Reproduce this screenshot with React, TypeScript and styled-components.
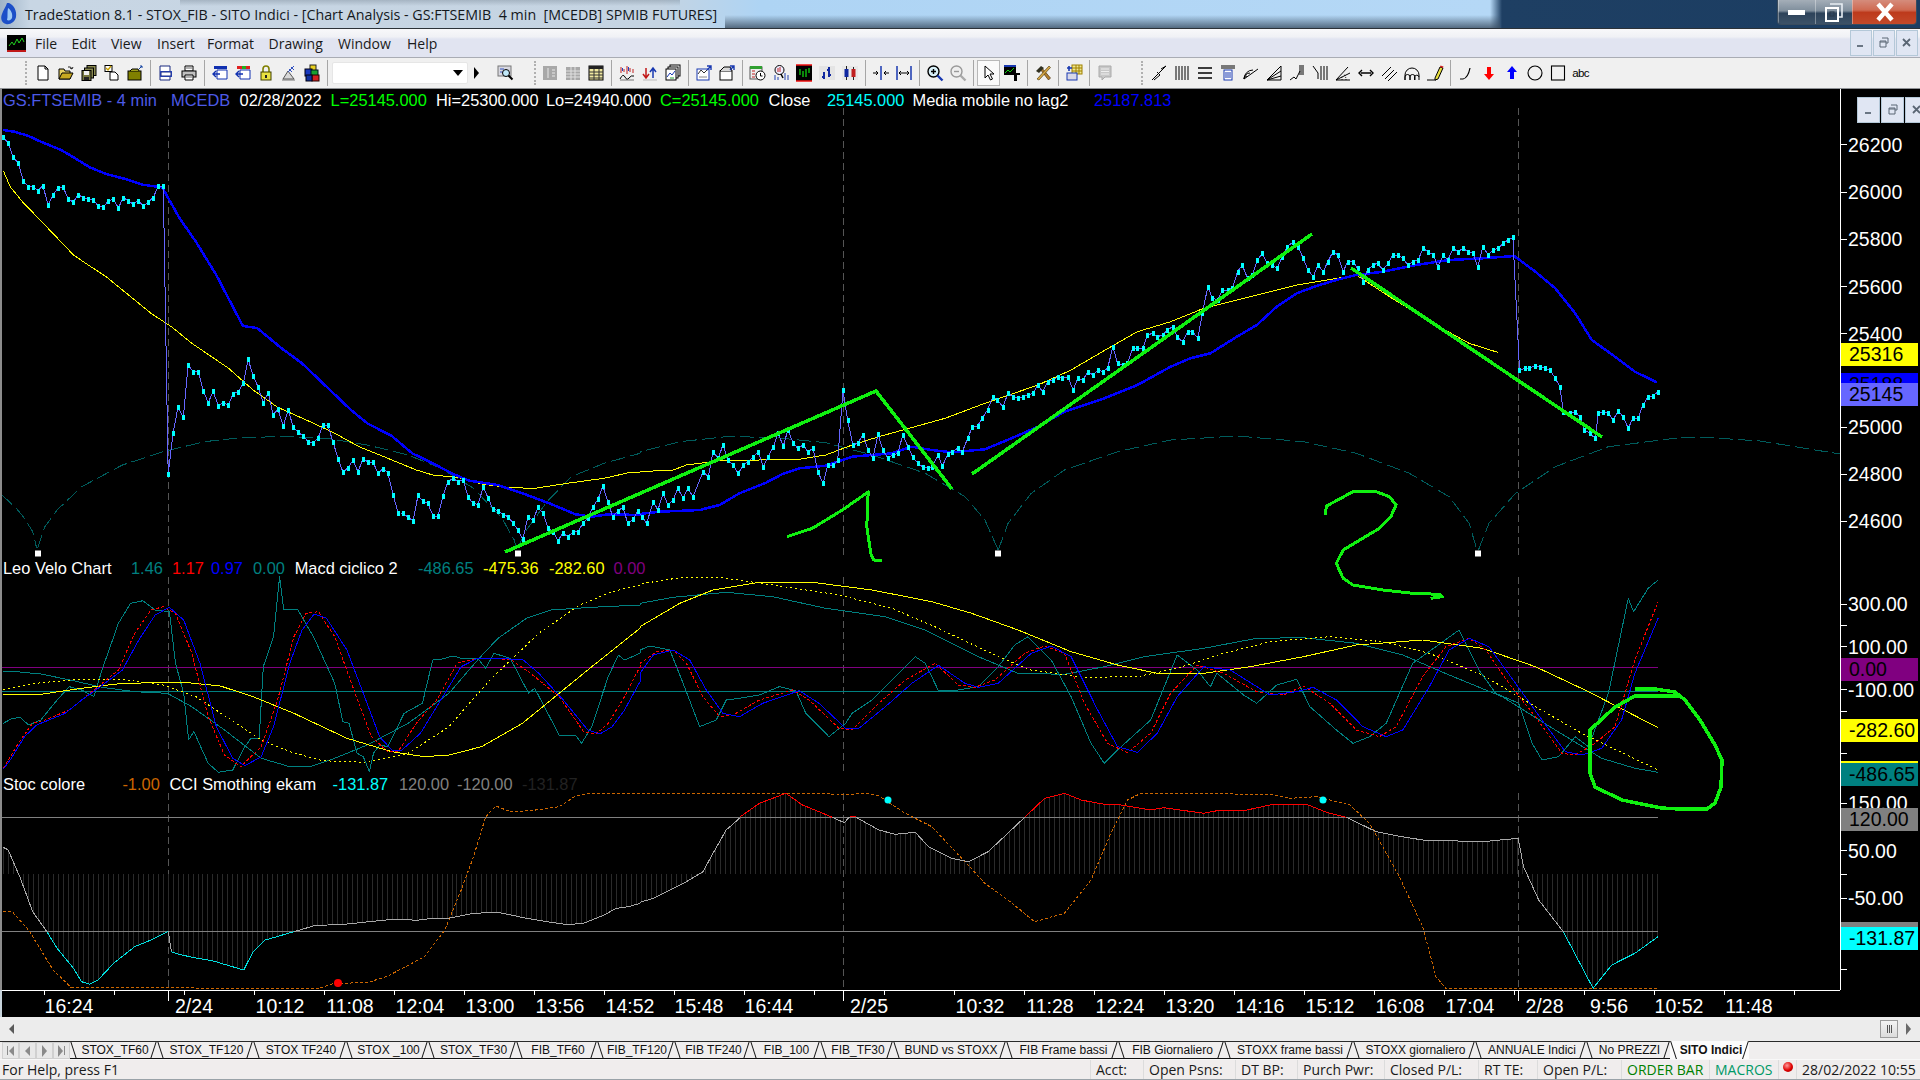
import React from "react";
import styled, { createGlobalStyle } from "styled-components";

const GlobalStyle = createGlobalStyle`
  html, body {
    margin: 0;
    padding: 0;
    background: #c8d4dc;
    overflow: hidden;
  }
`;

const Shell = styled.div`
  width: 1920px;
  height: 1080px;
  display: flex;
  flex-direction: column;
  overflow: hidden;
  font-family: "Liberation Sans", Arial, sans-serif;
`;

/* ---------- window chrome ---------- */

const TitleBar = styled.div`
  flex: 0 0 29px;
  box-sizing: border-box;
  display: flex;
  align-items: center;
  border-bottom: 1px solid #2c3238;
  background:
    linear-gradient(180deg, rgba(60, 80, 100, 0) 0, rgba(60, 80, 100, 0.8) 100%) 725px 15px / 775px 13px no-repeat,
    linear-gradient(180deg, rgba(90, 105, 120, 0.3) 0, rgba(90, 105, 120, 0) 100%) 180px 0 / 500px 6px no-repeat,
    linear-gradient(90deg, #9fb4c8 0, #c8d6e4 30px, #c5d4e2 660px, #aed4f4 760px, #b5d8f6 1490px, #1e3f63 1502px, #1b3d62 100%);
`;

const AppLogo = styled.svg`
  flex: 0 0 18px;
  margin: 0 7px 0 0;
`;

const TitleText = styled.span`
  flex: 1;
  font-family: "Open Sans", sans-serif;
  font-size: 14.28px;
  color: #14181c;
  white-space: pre;
`;

const WindowButtons = styled.div`
  display: flex;
  align-self: flex-start;
  margin-right: 3px;
  border: 1px solid #3a4c5e;
  border-top: none;
  border-radius: 0 0 4px 4px;
  overflow: hidden;
`;

const WindowButton = styled.div<{ $close?: boolean }>`
  width: ${(p) => (p.$close ? "63px" : "36px")};
  height: 24px;
  display: flex;
  align-items: center;
  justify-content: center;
  border-left: 1px solid rgba(255, 255, 255, 0.35);
  background: ${(p) =>
    p.$close
      ? "linear-gradient(180deg, #d58c7c 0, #cf6a52 42%, #bd3a1c 52%, #c4492a 100%)"
      : "linear-gradient(180deg, #a4aeb8 0, #7f8e9c 45%, #2d435a 55%, #3d5268 100%)"};
`;

const MenuBar = styled.div`
  flex: 0 0 29px;
  box-sizing: border-box;
  display: flex;
  align-items: center;
  border-bottom: 1px solid #a9acb4;
  background: linear-gradient(180deg, #f8f8fa 0, #f0f1f5 28%, #e1e4f1 36%, #e1e4f1 100%);
`;

const MenuLogo = styled.svg`
  margin: 0 9px 0 7px;
`;

const MenuItem = styled.span<{ $w: number }>`
  flex: 0 0 ${(p) => p.$w}px;
  font-family: "Open Sans", sans-serif;
  font-size: 14px;
  color: #1a1a1a;
`;

const MdiButtons = styled.div<{ $overlay?: boolean }>`
  display: flex;
  gap: 1px;
  margin-left: auto;
  margin-right: 2px;
  ${(p) =>
    p.$overlay &&
    `position: absolute; top: 8px; left: 16px; margin: 0; z-index: 5;
     & > div { width: 23px; }`}
`;

const MdiButton = styled.div`
  width: 22px;
  height: 26px;
  flex: none;
  display: flex;
  align-items: center;
  justify-content: center;
  background: #e0e6f3;
  border: 1px solid #b4c8d8;
  box-sizing: border-box;
`;

const ToolBar = styled.div`
  flex: 0 0 31px;
  box-sizing: border-box;
  display: flex;
  align-items: center;
  background: #f0f0f0;
  border-bottom: 1px solid #8f9296;
`;

const Grip = styled.div<{ $w: number; $right: number }>`
  flex: 0 0 ${(p) => p.$w}px;
  box-sizing: border-box;
  display: flex;
  justify-content: flex-end;
  padding-right: ${(p) => p.$right}px;

  &::before {
    content: "";
    height: 24px;
    border-left: 2px dotted #b0b0b0;
  }
`;

const ToolButton = styled.div<{ $pressed?: boolean }>`
  flex: 0 0 23px;
  height: 26px;
  box-sizing: border-box;
  display: flex;
  align-items: center;
  justify-content: center;
  ${(p) => p.$pressed && "background: #fafafa; border: 1px solid #b8b8b8;"}
`;

const AbcLabel = styled.span`
  font-size: 11.5px;
  letter-spacing: -0.6px;
  color: #000;
`;

const ToolSep = styled.div`
  flex: 0 0 8px;
  display: flex;
  justify-content: center;

  &::before {
    content: "";
    height: 26px;
    border-left: 1px solid #a6a6a6;
  }
`;

const Combo = styled.div`
  flex: 0 0 136px;
  height: 22px;
  box-sizing: border-box;
  background: #fff;
  border: 1px solid #e6e6e6;
  border-radius: 2px;
  display: flex;
  align-items: center;
  justify-content: flex-end;
  padding-right: 4px;
`;

const Triangle = styled.span<{ $dir: "down" | "right" | "left"; $color?: string }>`
  width: 0;
  height: 0;
  border-style: solid;
  border-color: transparent;
  ${(p) => {
    const c = p.$color || "#000";
    if (p.$dir === "down") return `border-width: 6px 5px 0 5px; border-top-color: ${c};`;
    if (p.$dir === "right") return `border-width: 6px 0 6px 5px; border-left-color: ${c};`;
    return `border-width: 5px 5px 5px 0; border-right-color: ${c};`;
  }}
`;

const PlaySlot = styled.div`
  flex: 0 0 18px;
  margin-right: 7.5px;
  display: flex;
  align-items: center;
  justify-content: center;
`;

/* ---------- chart ---------- */

const ChartBody = styled.div`
  flex: 0 0 901px;
  display: flex;
  background: #000;
  border-left: 2px solid #8c8c8c;
`;

const Plot = styled.div`
  position: relative;
  flex: 0 0 1838px;
  height: 901px;
`;

const PlotSvg = styled.svg`
  display: block;
`;

const Legend = styled.div<{ $top: number }>`
  position: absolute;
  left: 1px;
  top: ${(p) => p.$top}px;
  display: flex;
  font-size: 16.4px;
  line-height: 20px;
  white-space: pre;
`;

const LegendItem = styled.span<{ $w: number; $color: string }>`
  flex: 0 0 ${(p) => p.$w}px;
  color: ${(p) => p.$color};
`;

const PriceAxis = styled.div`
  position: relative;
  flex: 1;
  border-left: 1px solid #fff;
  overflow: hidden;
  font-size: 19.5px;
`;

const Tick = styled.i`
  position: absolute;
  left: 0;
  width: 6px;
  height: 1px;
  background: #fff;
`;

const AxisLabel = styled.span`
  position: absolute;
  left: 7px;
  line-height: 22px;
  color: #fff;
  white-space: pre;
`;

const PriceTag = styled.span<{ $bg: string }>`
  position: absolute;
  left: 0;
  width: 77px;
  height: 23px;
  box-sizing: border-box;
  padding-left: 8px;
  line-height: 23px;
  color: #000;
  background: ${(p) => p.$bg};
`;

const TimeAxis = styled.div`
  position: relative;
  flex: 0 0 27px;
  background: #000;
  margin-left: 2px;
  font-size: 19.5px;
`;

const TimeRule = styled.div`
  width: 1838px;
  height: 1px;
  background: #fff;
`;

const TimeTick = styled.i<{ $long?: boolean }>`
  position: absolute;
  top: 1px;
  width: 1px;
  height: ${(p) => (p.$long ? "10px" : "4px")};
  background: #fff;
`;

const TimeLabel = styled.span`
  position: absolute;
  top: 4px;
  line-height: 24px;
  color: #fff;
  transform: translateX(-50%);
`;

/* ---------- scrollbar, tabs, status ---------- */

const ScrollRow = styled.div`
  flex: 0 0 24px;
  display: flex;
  align-items: center;
  padding: 0 9px;
  background: #ececec;
`;

const ScrollThumb = styled.div`
  width: 18px;
  height: 18px;
  margin-left: auto;
  margin-right: 8px;
  box-sizing: border-box;
  display: flex;
  align-items: center;
  justify-content: center;
  gap: 1px;
  background: linear-gradient(180deg, #f4f4f4, #dcdcdc);
  border: 1px solid #9c9c9c;
`;

const ThumbLine = styled.i`
  width: 1px;
  height: 8px;
  background: #555;
`;

const TabStrip = styled.div`
  flex: 0 0 18px;
  box-sizing: border-box;
  display: flex;
  border-top: 1px solid #2a2a2a;
  background: #f0eeee;
`;

const TabNav = styled.div`
  flex: 0 0 70px;
  box-sizing: border-box;
  padding-left: 2px;
  display: flex;
`;

const TabNavButton = styled.div`
  flex: 0 0 17px;
  box-sizing: border-box;
  display: flex;
  align-items: center;
  justify-content: center;
  gap: 1px;
  background: #e8e8e8;
  border: 1px solid #d0d0d0;
`;

const NavBar = styled.i`
  width: 1px;
  height: 9px;
  background: #8a8a8a;
`;

const Tab = styled.div<{ $w: number; $active?: boolean }>`
  position: relative;
  flex: 0 0 ${(p) => p.$w}px;
  box-sizing: border-box;
  padding-left: 3px;
  display: flex;
  align-items: center;
  justify-content: center;
  font-size: 12px;
  color: #111;
  border-bottom: 1px solid #111;
  font-weight: ${(p) => (p.$active ? 700 : 400)};
  ${(p) => p.$active && "background: #fcfcfc; margin-top: -1px; border-bottom: none;"}

  &::before,
  &::after {
    content: "";
    position: absolute;
    top: 0;
    bottom: 0;
    border-left: 1px solid #111;
  }

  &::before {
    left: 3px;
    transform: skewX(18deg);
  }

  &::after {
    right: 3px;
    transform: skewX(-18deg);
  }
`;

const StatusBar = styled.div`
  flex: 0 0 19px;
  box-sizing: border-box;
  display: flex;
  align-items: center;
  border-top: 1px solid #f8f8f8;
  border-bottom: 1px solid #9aa2a8;
  background: #f0eded;
  font-family: "Open Sans", sans-serif;
  font-size: 14px;
  color: #1a1a1a;
`;

const StatusHelp = styled.span`
  flex: 1;
  padding-left: 2px;
`;

const StatusCell = styled.span<{ $w: number; $color?: string }>`
  flex: 0 0 ${(p) => p.$w}px;
  box-sizing: border-box;
  height: 100%;
  padding-left: 5px;
  display: flex;
  align-items: center;
  white-space: pre;
  border-left: 1px solid #dcdcdc;
  color: ${(p) => p.$color || "inherit"};
`;

const StatusDot = styled.i`
  width: 10px;
  height: 10px;
  margin: -5px 0 0 -1px;
  border-radius: 50%;
  background: radial-gradient(circle at 40% 35%, #ff9a9a, #e00000 55%, #8a0000);
`;

/* ---------- traced chart data: flat x,y lists read off crops of the chart ---------- */

type Pt = [number, number];

const mapFlat = (flat: number[], sx: number, ox: number, oy: number): Pt[] => {
  const out: Pt[] = [];
  for (let i = 0; i < flat.length; i += 2) out.push([ox + flat[i] / sx, oy + flat[i + 1] / 3]);
  return out;
};
const topL = (f: number[]) => mapFlat(f, 2.45, 0, 100);
const topR = (f: number[]) => mapFlat(f, 1.5077, 640, 200);
const lowL = (f: number[]) => mapFlat(f, 2.45, 0, 550);
const lowR = (f: number[]) => mapFlat(f, 1.5077, 640, 560);

const price: Pt[] = [
  ...topL([8,110,20,130,32,170,45,190,57,243,69,260,81,260,93,272,105,257,118,315,130,284,142,264,154,260,167,296,179,306,192,284,204,293,216,298,228,299,241,318,253,321,265,304,277,298,290,323,302,293,314,302,326,312,338,302,351,318,363,306,375,293,388,258,400,258,412,1122,424,998,436,922,449,952,461,794,473,815,486,815,498,872,510,908,522,874,535,918,547,908,559,915,571,882,584,875,596,850,608,778,620,828,632,860,645,908,657,878,669,944,681,928,694,978,706,930,718,980,730,997,743,1007,755,1026,767,1029,779,1015,791,975,803,976,816,1026,828,1076,840,1116,853,1103,865,1080,877,1116,889,1076,902,1086,914,1086,926,1120,938,1106,950,1118,963,1184,975,1238,987,1240,1000,1252,1012,1263,1024,1186,1036,1204,1048,1210,1061,1248,1073,1248,1085,1188,1097,1145,1110,1135,1122,1145,1135,1140,1147,1192,1159,1210,1171,1214,1184,1160,1196,1195,1208,1228,1220,1232,1233,1244,1245,1250,1257,1270,1269,1290,1281,1318,1293,1252,1306,1260,1318,1222,1330,1240,1343,1284,1355,1295,1367,1322,1379,1300,1391,1310,1404,1296,1416,1295,1428,1270,1440,1255,1452,1222,1465,1198,1477,1158,1489,1205,1501,1250,1514,1232,1526,1222,1538,1270,1551,1258,1563,1232]),
  ...topR([3,950,10,970,20,905,27,930,35,880,42,915,50,900,57,865,65,895,72,865,80,890,95,815,103,830,110,755,118,775,125,735,133,780,140,795,148,820,156,795,163,785,171,770,178,755,186,800,193,770,201,740,208,700,216,738,223,690,231,730,238,745,246,735,253,755,261,745,268,815,276,850,283,795,291,795,298,780,306,570,313,660,321,735,328,730,336,705,344,750,351,775,359,703,366,750,374,775,381,765,389,760,396,705,404,740,411,770,419,790,426,800,434,805,441,800,449,765,456,798,464,762,471,755,479,745,486,755,494,715,501,680,509,678,516,655,524,630,532,590,539,600,547,620,555,580,562,590,570,595,577,590,585,585,592,580,600,555,607,575,615,545,622,540,630,530,637,535,645,530,653,570,660,535,668,540,675,515,683,525,690,510,698,515,705,505,713,440,720,490,728,495,735,490,743,445,750,445,758,445,765,405,773,400,780,410,788,405,795,390,803,380,810,410,818,425,826,395,833,395,841,415,848,340,856,260,863,295,871,300,878,270,886,270,893,265,901,215,908,195,916,235,923,225,931,180,938,160,946,190,953,195,961,205,968,170,976,140,985,125,992,140,1000,175,1007,210,1015,230,1022,195,1030,215,1037,185,1045,155,1052,165,1060,215,1067,185,1075,185,1082,205,1090,245,1097,210,1105,195,1112,190,1120,210,1128,190,1135,165,1143,165,1150,175,1158,195,1165,185,1173,180,1181,145,1188,155,1196,165,1203,200,1211,165,1218,180,1226,145,1233,155,1241,145,1248,155,1256,160,1263,200,1271,140,1279,165,1286,150,1294,145,1301,130,1309,120,1316,112,1326,510,1334,505,1341,505,1349,497,1357,500,1365,505,1372,510,1380,535,1387,560,1392,635,1402,640,1410,635,1417,650,1424,690,1432,700,1440,715,1445,640,1452,635,1460,640,1467,660,1475,632,1482,650,1490,685,1497,655,1505,655,1512,615,1520,590,1527,588,1535,575]),
];

const maBlue: Pt[] = [
  ...topL([8,90,35,95,70,108,100,125,150,150,180,172,220,202,260,222,310,238,350,254,395,262,400,268,440,355,480,425,530,525,595,678,630,684,690,745,740,790,800,860,860,930,900,970,960,1008,1010,1060,1060,1090,1110,1122,1150,1142,1220,1155,1280,1180,1350,1212,1410,1243,1450,1250,1490,1243,1568,1245]),
  ...topR([0,942,30,935,90,930,120,915,150,880,190,848,215,822,240,805,280,797,320,770,380,760,410,740,440,750,470,757,520,748,560,715,600,680,640,635,700,595,750,555,800,500,830,475,860,460,900,410,930,375,960,320,990,280,1020,258,1050,240,1080,225,1120,215,1170,195,1220,180,1270,175,1318,168,1350,215,1380,265,1410,340,1435,420,1470,470,1500,515,1533,547]),
];

const maYellow: Pt[] = [
  ...topL([8,212,25,260,55,305,110,375,180,465,210,490,260,530,310,580,370,640,420,680,470,730,560,805,620,870,680,922,760,965,820,1000,880,1040,950,1075,1020,1110,1060,1125,1120,1132,1180,1152,1250,1163,1310,1165,1400,1148,1480,1135,1540,1118,1568,1116]),
  ...topR([0,815,50,810,70,795,120,782,240,778,280,765,320,735,360,710,400,688,460,655,520,610,600,555,650,510,710,440,750,395,800,365,850,325,920,290,990,255,1060,232,1080,225,1130,290,1200,375,1250,430,1293,457]),
];

const arcs: Pt[][] = [
  topL([5,1185,40,1225,60,1255,80,1295,90,1345]),
  [
    ...topL([92,1345,110,1280,140,1230,200,1160,300,1095,400,1055,500,1025,600,1012,700,1010,800,1015,900,1035,1000,1065,1080,1105,1160,1165,1230,1255,1260,1320,1265,1345]),
  ],
  [
    ...topL([1268,1345,1290,1290,1340,1205,1400,1130,1480,1090,1568,1060]),
    ...topR([0,755,60,725,130,710,200,712,280,728,350,765,430,820,490,890,520,960,540,1050]),
  ],
  topR([540,1050,555,970,590,880,640,810,720,755,800,720,900,708,1000,725,1080,760,1160,820,1220,890,1250,970,1262,1050]),
  [
    ...topR([1264,1050,1280,970,1320,880,1380,800,1460,740,1560,715]),
    [1700, 437], [1760, 441], [1840, 454],
  ],
];

const leoBlue: Pt[] = [
  ...lowL([8,658,25,630,60,560,90,525,160,490,200,450,240,415,300,360,340,270,380,195,415,172,450,210,490,340,530,530,570,625,600,647,640,620,670,530,710,340,740,240,770,192,800,205,850,300,890,430,930,560,960,600,985,600,1030,550,1080,450,1130,350,1170,325,1280,328,1320,370,1380,450,1440,540,1470,552,1500,530,1530,480,1568,395]),
  ...lowR([0,340,20,285,50,270,75,300,100,390,125,460,150,470,185,430,240,392,270,430,310,505,330,505,370,440,410,370,450,316,490,370,510,382,540,370,590,280,620,258,650,290,690,450,720,560,750,577,780,520,810,410,850,320,890,330,950,405,990,395,1015,382,1050,420,1090,500,1125,530,1150,510,1190,380,1220,270,1250,235,1280,260,1320,370,1360,480,1395,575,1420,585,1450,565,1480,480,1500,340,1535,175]),
];

const leoRed: Pt[] = [
  ...lowL([8,655,50,570,80,520,110,510,170,480,230,420,290,360,330,250,370,180,400,170,430,190,470,310,510,500,550,615,590,650,640,590,680,450,720,260,750,190,780,185,820,260,870,430,910,560,950,605,975,605,1020,520,1070,450,1120,340,1170,325,1250,328,1300,370,1370,440,1430,545,1460,553,1490,520,1530,440,1568,350]),
  ...lowR([0,310,25,275,50,270,70,310,95,410,120,470,140,465,180,420,230,390,255,420,300,505,320,510,360,430,400,360,445,310,480,375,505,382,535,360,580,280,610,258,640,280,670,430,705,550,735,578,770,520,800,400,840,315,880,340,930,395,970,405,1000,378,1040,430,1080,510,1115,530,1140,500,1180,350,1215,260,1250,235,1275,270,1310,370,1350,470,1390,580,1410,585,1440,550,1470,500,1500,300,1535,125]),
];

const leoTeal: Pt[] = [
  ...lowL([8,520,30,505,50,503,70,525,100,510,140,450,170,410,200,420,230,440,250,360,290,220,320,160,350,152,380,180,415,185,430,340,450,430,462,570,475,545,510,640,535,667,570,660,600,590,615,565,635,565,645,350,670,260,685,80,695,178,730,180,770,265,820,400,840,515,855,520,875,610,890,620,905,665,915,610,930,585,950,590,990,490,1035,460,1060,330,1080,328,1110,318,1130,325,1170,325,1190,355,1210,310,1250,325,1295,430,1310,415,1370,555,1410,555,1425,580,1450,530,1490,380,1515,315,1530,330,1568,310]),
  ...lowR([0,270,15,258,45,270,65,370,90,500,115,480,130,420,150,415,180,405,210,380,235,392,250,460,285,530,310,490,320,460,350,420,380,360,415,290,430,310,450,392,480,390,510,380,540,320,565,255,585,230,620,300,650,410,680,550,700,610,720,570,770,480,810,285,840,330,860,380,870,340,910,405,930,430,960,375,990,358,1010,440,1050,510,1075,550,1100,530,1125,490,1165,310,1235,210,1265,330,1290,400,1325,430,1345,550,1360,600,1385,590,1410,530,1430,560,1460,400,1490,115,1498,155,1520,85,1535,60]),
];

const macdTeal: Pt[] = [
  ...lowL([8,366,40,365,100,372,180,392,250,412,330,425,410,430,470,470,550,540,640,625,710,650,760,650,820,625,900,585,1000,520,1100,430,1170,330,1220,265,1290,205,1350,180,1450,172,1568,165]),
  ...lowR([0,130,50,112,130,97,200,110,280,145,370,170,430,210,510,290,570,340,640,343,700,320,760,290,850,265,930,235,1000,233,1080,250,1150,285,1220,345,1300,410,1380,510,1450,595,1500,625,1535,637]),
];

const macdYellow: Pt[] = [
  ...lowL([8,433,100,433,200,415,300,400,450,397,540,408,620,440,720,490,850,565,960,605,1040,620,1100,615,1180,590,1280,520,1370,430,1450,350,1568,235]),
  ...lowR([0,200,60,130,110,90,180,67,260,67,350,90,440,125,500,160,570,210,650,275,720,315,780,340,850,340,920,320,1000,290,1080,255,1180,240,1270,265,1350,320,1430,395,1535,503]),
];

const macdDotted: Pt[] = [
  ...lowL([8,418,100,398,200,388,310,390,400,405,480,440,560,505,640,570,710,605,790,632,890,637,1000,610,1100,530,1200,390,1320,250,1420,165,1500,125,1568,105]),
  ...lowR([0,72,60,53,120,52,200,75,300,105,380,145,450,205,540,290,590,330,670,352,750,350,810,325,880,280,950,245,1040,230,1120,245,1190,280,1270,345,1350,440,1420,520,1535,630]),
];

const stoc: Pt[] = [
  ...lowL([8,1085,30,1085,70,1140,130,1260,175,1313,780,1315,820,1300,900,1298,950,1278,1040,1220,1090,1140,1130,1020,1160,920,1190,800,1215,768,1250,785,1300,782,1370,770,1410,738,1440,730,1568,730]),
  ...lowR([0,700,280,700,300,705,340,700,360,708,400,760,440,800,490,905,520,970,555,1020,595,1085,640,1060,680,960,710,820,735,720,755,700,950,703,980,715,1020,710,1070,735,1100,790,1145,950,1180,1100,1200,1250,1215,1285,1535,1285]),
];

// CCI is drawn in pieces: grey in the band, red over 120, cyan under -120
const cciPieces: { color: string; pts: Pt[] }[] = [
  { color: "#a8a8a8", pts: lowL([8,892,20,900,50,985,80,1085,115,1145]) },
  { color: "#00e0e0", pts: lowL([115,1145,140,1195,180,1255,200,1295,220,1303,240,1290,280,1238,330,1190,370,1170,412,1144]) },
  { color: "#a8a8a8", pts: lowL([412,1144,420,1205]) },
  { color: "#00e0e0", pts: lowL([420,1205,430,1210,470,1222,520,1232,597,1260,620,1205,650,1170,720,1145]) },
  { color: "#a8a8a8", pts: [...lowL([720,1145,770,1127,850,1122,970,1107,1020,1111,1060,1105,1100,1105,1160,1090,1220,1087,1290,1105,1340,1115,1390,1124,1430,1120,1480,1095,1510,1075,1540,1070,1568,1060]), ...lowR([0,1027,20,1015,50,985,70,965,95,935,110,880,130,810,150,775])] },
  { color: "#ff0000", pts: lowR([150,772,180,730,220,700,245,735,270,755,290,772]) },
  { color: "#a8a8a8", pts: lowR([290,772,308,788,316,770]) },
  { color: "#ff0000", pts: lowR([316,770,326,770]) },
  { color: "#a8a8a8", pts: lowR([326,772,360,810,385,823,415,817,435,860,470,895,495,905,525,875,580,772]) },
  { color: "#ff0000", pts: lowR([580,772,610,715,640,700,665,720,700,733,725,735,770,750,790,743,850,760,870,752,910,752,950,735,1005,733,1035,757,1065,772]) },
  { color: "#a8a8a8", pts: lowR([1065,772,1110,815,1140,827,1180,840,1270,845,1324,835,1332,920,1355,1020,1392,1115]) },
  { color: "#00e0e0", pts: lowR([1392,1115,1437,1285,1465,1215,1500,1180,1535,1130]) },
];

const drawnStrokes: { w: number; pts: Pt[] }[] = [
  { w: 3.5, pts: [[505, 552], [876, 391], [952, 489]] },
  { w: 3.5, pts: [[972, 474], [1312, 234]] },
  { w: 3.5, pts: [[1351, 268], [1602, 437]] },
  { w: 3, pts: topR([222,1010,260,985,305,930,344,876,342,980,348,1060,352,1080,365,1081]) },
  { w: 3, pts: topR([1033,945,1035,918,1075,875,1110,875,1130,890,1140,915,1132,950,1115,985,1060,1050,1050,1090,1060,1135,1075,1155,1120,1170,1165,1180,1205,1183,1210,1190,1192,1195]) },
  { w: 3.5, pts: [[1635,689],[1655,689],[1675,692],[1685,700],[1700,720],[1715,745],[1722,760],[1721,787],[1715,803],[1707,809],[1680,809],[1661,808],[1622,800],[1595,787],[1590,773],[1590,730],[1615,707],[1635,696],[1680,696]] },
];

const toPoints = (pts: Pt[]) => pts.map(([x, y]) => `${x.toFixed(1)},${y.toFixed(1)}`).join(" ");

const cciAll = cciPieces.flatMap((p) => p.pts);

const cciAt = (x: number) => {
  for (let i = 1; i < cciAll.length; i++) {
    const [x0, y0] = cciAll[i - 1];
    const [x1, y1] = cciAll[i];
    if (x >= x0 && x <= x1 && x1 > x0) return y0 + ((y1 - y0) * (x - x0)) / (x1 - x0);
  }
  return 874;
};

const histPath = () => {
  let d = "";
  for (let x = 3.3; x < 1658; x += 4.98) d += `M${Math.round(x) + 0.5} 874V${cciAt(x).toFixed(0)}`;
  return d;
};

const priceMarkers = price
  .map(([x, y]) => `M${Math.round(x) - 1.5} ${Math.round(y) - 2}h3v5h-3z`)
  .join("");

/* ---------- text data ---------- */

const legends: { top: number; items: { t: string; c: string; x: number }[] }[] = [
  {
    top: 1,
    items: [
      { t: "GS:FTSEMIB - 4 min", c: "#4d5ae6", x: 3 },
      { t: "MCEDB", c: "#4d5ae6", x: 171 },
      { t: "02/28/2022", c: "#fff", x: 239.6 },
      { t: "L=25145.000", c: "#00ff00", x: 330.6 },
      { t: "Hi=25300.000", c: "#fff", x: 436 },
      { t: "Lo=24940.000", c: "#fff", x: 546 },
      { t: "C=25145.000", c: "#00ff00", x: 660 },
      { t: "Close", c: "#fff", x: 768.6 },
      { t: "25145.000", c: "#00ffff", x: 827 },
      { t: "Media mobile no lag2", c: "#fff", x: 912.6 },
      { t: "25187.813", c: "#0000ff", x: 1094 },
    ],
  },
  {
    top: 469,
    items: [
      { t: "Leo Velo Chart", c: "#fff", x: 3 },
      { t: "1.46", c: "#008080", x: 131 },
      { t: "1.17", c: "#ff0000", x: 172 },
      { t: "0.97", c: "#0000ff", x: 211 },
      { t: "0.00", c: "#008080", x: 253 },
      { t: "Macd ciclico 2", c: "#fff", x: 294.7 },
      { t: "-486.65", c: "#008080", x: 418 },
      { t: "-475.36", c: "#ffff00", x: 483 },
      { t: "-282.60", c: "#ffff00", x: 549 },
      { t: "0.00", c: "#800080", x: 613.5 },
    ],
  },
  {
    top: 685,
    items: [
      { t: "Stoc colore", c: "#fff", x: 3 },
      { t: "-1.00", c: "#cc6600", x: 122.4 },
      { t: "CCI Smothing ekam", c: "#fff", x: 169.4 },
      { t: "-131.87", c: "#00ffff", x: 332.6 },
      { t: "120.00", c: "#808080", x: 399 },
      { t: "-120.00", c: "#808080", x: 457 },
      { t: "-131.87", c: "#222", x: 522 },
    ],
  },
];

const axisLabels: [string, number][] = [
  ["26200", 144.5], ["26000", 192], ["25800", 239], ["25600", 286.5], ["25400", 333.5],
  ["25200", 380], ["25000", 427], ["24800", 474], ["24600", 521],
  ["300.00", 604], ["100.00", 647], ["-100.00", 690],
  ["150.00", 803], ["50.00", 851], ["-50.00", 898], ["-100.00", 942],
];

const axisTicks = [
  144, 192, 239, 286, 333, 427, 474, 521, 604, 625, 646, 689, 711, 753,
  803, 850, 874, 898, 922, 969,
];

// later tags sit on top; two of them only show as a thin strip, their text is covered
const priceTags: [string, number, string][] = [
  ["25316", 343, "#ffff00"],
  ["25188", 373, "#0000ff"],
  ["25145", 383, "#6666ff"],
  ["0.00", 658, "#800080"],
  ["", 761, "#ffff00"],
  ["-282.60", 719, "#ffff00"],
  ["-486.65", 763, "#008080"],
  ["120.00", 808, "#808080"],
  ["", 922, "#808080"],
  ["-131.87", 927, "#00ffff"],
];

const timeLabels: [string, number][] = [
  ["16:24", 69], ["2/24", 194], ["10:12", 280], ["11:08", 350], ["12:04", 420], ["13:00", 490],
  ["13:56", 560], ["14:52", 630], ["15:48", 699], ["16:44", 769], ["2/25", 869], ["10:32", 980],
  ["11:28", 1050], ["12:24", 1120], ["13:20", 1190], ["14:16", 1260], ["15:12", 1330], ["16:08", 1400],
  ["17:04", 1470], ["2/28", 1544.5], ["9:56", 1609], ["10:52", 1679], ["11:48", 1749],
];

const dateDividers = [168, 843, 1518];

const tabs: [string, number][] = [
  ["STOX_TF60", 87], ["STOX_TF120", 96], ["STOX TF240", 93], ["STOX _100", 82], ["STOX_TF30", 88],
  ["FIB_TF60", 81], ["FIB_TF120", 77], ["FIB TF240", 76], ["FIB_100", 70], ["FIB_TF30", 73],
  ["BUND vs STOXX", 113], ["FIB Frame bassi", 112], ["FIB Giornaliero", 106], ["STOXX frame bassi", 129],
  ["STOXX giornaliero", 122], ["ANNUALE Indici", 111], ["No PREZZI", 84],
];

const menus: [string, number][] = [
  ["File", 36.4], ["Edit", 39.6], ["View", 46], ["Insert", 50], ["Format", 61.6], ["Drawing", 69.4], ["Window", 69], ["Help", 40],
];

/* ---------- toolbar icons ---------- */

const S = { fill: "none", stroke: "#000" };

const icons: Record<string, React.ReactNode> = {
  new: <><path d="M4 2h7l3 3v11H4z" fill="#fff" stroke="#000" /><path d="M11 2v3h3" {...S} /></>,
  open: <><path d="M2 15V5h5l1 2h5v8z" fill="#e8d060" stroke="#000" /><path d="M2 15l3-6h11l-3 6z" fill="#c8a820" stroke="#000" /><path d="M11 3q3-1 4 2M15 5l1-2M15 5l-2-1" fill="none" stroke="#222" /></>,
  save: <><rect x="7" y="1.5" width="9" height="10" fill="#8a8a50" stroke="#000" /><rect x="4.5" y="4" width="9" height="10" fill="#8a8a50" stroke="#000" /><rect x="2" y="6.5" width="9" height="10" fill="#777740" stroke="#000" /><rect x="4" y="7" width="5" height="4" fill="#eee" /><rect x="4" y="13" width="5" height="3" fill="#222" /></>,
  check: <><rect x="2" y="1.5" width="7" height="6" fill="#fff" stroke="#000" /><path d="M3 4l2 2 3-4" fill="none" stroke="#c8a000" strokeWidth="1.4" /><path d="M7 8h5l3 3v5H7z" fill="#fff" stroke="#000" /></>,
  box: <><rect x="2" y="7" width="13" height="9" fill="#808000" stroke="#000" /><path d="M4 7l2-2h6l1 2" fill="#a0a020" stroke="#000" /><path d="M13 5l3-3M14 2h2v2" fill="none" stroke="#1040a0" /></>,
  preview: <><path d="M3 2h10v14H3z" fill="#fff" stroke="#1a2a80" /><rect x="3" y="7" width="12" height="6" fill="#3050d0" /><rect x="4" y="8" width="10" height="4" fill="#fff" stroke="#1a2a80" /></>,
  print: <><path d="M5 2h8v5H5z" fill="#fff" stroke="#000" /><rect x="2" y="7" width="14" height="6" fill="#c0c0c0" stroke="#000" /><path d="M5 11h8v5H5z" fill="#fff" stroke="#000" /><path d="M6 4h6M6 13h6" stroke="#666" /></>,
  winA: <><rect x="3" y="2" width="13" height="3" fill="#1030b0" /><path d="M6 6h10v9H6z" fill="#fff" stroke="#1030b0" /><path d="M9 10H2m3-3l-3 3 3 3" fill="none" stroke="#1030b0" strokeWidth="1.4" /></>,
  winB: <><rect x="3" y="2" width="5" height="3" fill="#e02020" /><rect x="8" y="2" width="4" height="3" fill="#20b020" /><rect x="12" y="2" width="4" height="3" fill="#e02020" /><path d="M6 6h10v9H6z" fill="#fff" stroke="#1030b0" /><path d="M9 10H2m3-3l-3 3 3 3" fill="none" stroke="#1030b0" strokeWidth="1.4" /></>,
  lock: <><path d="M6 8V5a3 3 0 016 0v3" fill="none" stroke="#808000" strokeWidth="1.6" /><rect x="4" y="8" width="10" height="8" fill="#e8e040" stroke="#404000" /><rect x="8" y="11" width="2" height="3" fill="#222" /></>,
  dish: <><path d="M3 15l5-8 6 8z" fill="#d8d8d8" stroke="#555" /><path d="M8 8l6-6M11 3l3 3M9 5l3 3" stroke="#3050c0" fill="none" /><path d="M2 16h13" stroke="#777" /></>,
  cubes: <><rect x="7" y="1" width="6" height="6" fill="#e8d020" stroke="#222" /><rect x="2" y="5" width="7" height="7" fill="#1838c0" stroke="#001" /><rect x="8" y="6" width="7" height="6" fill="#18a030" stroke="#012" /><rect x="9" y="11" width="7" height="6" fill="#d02020" stroke="#200" /><rect x="3" y="11" width="6" height="6" fill="#1030a0" stroke="#001" /></>,
  scan: <><rect x="2" y="2" width="13" height="10" fill="#d8d8e0" stroke="#777" /><path d="M4 5h4M4 8h3" stroke="#3050c0" /><circle cx="10" cy="9" r="3.5" fill="#c0e8f8" stroke="#000" /><path d="M12.5 11.5l4 4" stroke="#000" strokeWidth="2" /></>,
  grayA: <><rect x="2" y="2" width="14" height="14" fill="#a8a8a8" /><path d="M7 4v10M11 6h3M11 9h3M11 12h3" stroke="#e8e8e8" /></>,
  grayB: <><rect x="2" y="3" width="14" height="13" fill="#a8a8a8" /><path d="M2 7h14M2 10h14M2 13h14M7 3v13M11 3v13" stroke="#e0e0e0" /></>,
  table: <><rect x="2" y="2" width="14" height="14" fill="#f0e8a0" stroke="#000" /><rect x="2" y="2" width="14" height="3" fill="#222" /><path d="M2 8h14M2 11h14M2 14h14M7 5v11M12 5v11" stroke="#333" /></>,
  chartWave: <><path d="M3 9V3M6 8V5M9 10V2M12 8V4M15 9V5" stroke="#c02020" /><path d="M4.5 7V4M10.5 7V3" stroke="#2040c0" /><path d="M2 15q3-6 5-2t4 1 5-2" fill="none" stroke="#000" /><path d="M2 16h14" stroke="#777" /></>,
  updown: <><path d="M5 4v9m-3-3l3 4 3-4" fill="none" stroke="#c01818" strokeWidth="1.5" /><path d="M12 14V4m-3 4l3-4 3 4" fill="none" stroke="#1838b0" strokeWidth="1.5" /><path d="M2 16h14" stroke="#bbb" /></>,
  stack: <><rect x="6" y="1" width="10" height="11" fill="#fff" stroke="#000" /><rect x="4" y="3" width="10" height="11" fill="#fff" stroke="#000" /><rect x="2" y="5" width="10" height="11" fill="#fff" stroke="#000" /><path d="M3 13l3-4 2 2 3-4" fill="none" stroke="#1838b0" /><path d="M6 14h4" stroke="#20a030" /></>,
  edit1: <><rect x="2" y="5" width="12" height="11" fill="#fff" stroke="#1838b0" /><path d="M3 10l3-4 3 3 4-4" fill="none" stroke="#333" /><path d="M12 2h4v4M16 2l-4 4" fill="none" stroke="#1838b0" strokeWidth="1.4" /><path d="M4 13h8" stroke="#888" /></>,
  edit2: <><rect x="2" y="7" width="12" height="9" fill="#fff" stroke="#000" /><path d="M2 7l4-4h6l2 4" fill="#d8d8d8" stroke="#000" /><path d="M12 2h4v4M16 2l-4 4" fill="none" stroke="#1838b0" strokeWidth="1.4" /></>,
  cal: <><rect x="1" y="3" width="12" height="12" fill="#eee" stroke="#555" /><rect x="1" y="2" width="12" height="3" fill="#30a030" /><path d="M3 7h3M3 10h3M3 13h3" stroke="#c02020" /><circle cx="11.5" cy="11.5" r="4.5" fill="#fff" stroke="#000" /><path d="M11.5 9v3h2" fill="none" stroke="#000" /></>,
  search: <><circle cx="7.5" cy="6" r="4.5" fill="#eef" stroke="#000" /><path d="M9 10l2 4" stroke="#000" strokeWidth="1.5" /><path d="M3 11v5M6 13v3M13 9v7M16 11v5" stroke="#2040b0" /><path d="M6 4v4M8 3v5" stroke="#c02020" /></>,
  bars: <><rect x="1" y="1" width="16" height="16" fill="#000" /><path d="M1 1h16M1 17h16" stroke="#f01010" strokeWidth="1.4" /><path d="M5 5v6M8 7v6M11 5v8M14 4v5" stroke="#10d010" strokeWidth="1.3" /></>,
  blueBars: <><rect x="1" y="2" width="16" height="14" fill="#e4e4e4" /><path d="M6 8v7M4 13h2" stroke="#1028a0" strokeWidth="2" /><path d="M11 3v10M9 6h2M11 11h2" stroke="#1028a0" strokeWidth="2" /></>,
  candles: <><rect x="1" y="2" width="16" height="14" fill="#e8e8e8" /><path d="M5.5 2v14M12.5 3v13" stroke="#222" /><rect x="3.5" y="5" width="4" height="8" fill="#1028a0" /><rect x="10.5" y="5" width="4" height="8" fill="#c02020" /></>,
  inV: <><path d="M9 2v14" stroke="#1838b0" strokeWidth="1.5" /><path d="M1 9h5m-2-2l2 2-2 2M17 9h-5m2-2l-2 2 2 2" fill="none" stroke="#000" /></>,
  outV: <><path d="M2 2v14M16 2v14" stroke="#1838b0" strokeWidth="1.5" /><path d="M9 9H4m2-2L4 9l2 2M9 9h5m-2-2l2 2-2 2" fill="none" stroke="#000" /></>,
  zin: <><circle cx="7.5" cy="7.5" r="5.5" fill="#d8f0f8" stroke="#000" strokeWidth="1.4" /><path d="M5 7.5h5M7.5 5v5" stroke="#000" strokeWidth="1.4" /><path d="M11.5 11.5l5 5" stroke="#1838b0" strokeWidth="2.4" /></>,
  zout: <><circle cx="7.5" cy="7.5" r="5.5" fill="#eee" stroke="#999" strokeWidth="1.4" /><path d="M5 7.5h5" stroke="#999" strokeWidth="1.4" /><path d="M11.5 11.5l5 5" stroke="#aaa" strokeWidth="2.4" /></>,
  cursor: <path d="M5 2v12l3-3 2.5 5 2-1-2.5-5h4z" fill="#fff" stroke="#000" />,
  chartT: <><rect x="1" y="1" width="12" height="10" fill="#000" /><rect x="1" y="1" width="12" height="2" fill="#1838b0" /><path d="M2 9l3-3 2 2 4-4" fill="none" stroke="#10d010" /><path d="M8 9h9v2h-3v6h-3v-6H8z" fill="#000" /></>,
  hammer: <><path d="M6 5l1.5-1.5 9 10.5-2 2z" fill="#b08030" stroke="#402000" strokeWidth="0.6" /><path d="M2 7l5-5 3 2-5 5z" fill="#303020" /><path d="M15 2l1.5 1.5L5 16l-2-1z" fill="#d8a848" stroke="#403000" strokeWidth="0.6" /></>,
  grid: <><rect x="7" y="1" width="10" height="9" fill="#f0e890" stroke="#a08000" /><path d="M7 4h10M7 7h10M11 1v9M14 1v9" stroke="#a08000" /><rect x="2" y="9" width="10" height="7" fill="#d8d8e8" stroke="#1838b0" /><path d="M4 2v5M2 4h5" stroke="#1838b0" strokeWidth="1.6" /></>,
  note: <><path d="M3 2h12v11H9l-3 3v-3H3z" fill="#c8c8c8" stroke="#aaa" /><path d="M5 5h8M5 7.5h8M5 10h8" stroke="#eee" /></>,
  fork: <path d="M2 16L16 2M7 8l3 3-6 5M11 5l5-3" {...S} />,
  vlines: <path d="M3 2v14M6 2v14M9 2v14M12 2v14M15 2v14" {...S} />,
  hlines: <path d="M2 4h14M2 9h14M2 14h14" {...S} strokeWidth="1.3" />,
  calc: <><path d="M2 2h14M2 4h14" {...S} /><rect x="5" y="6" width="8" height="10" fill="#fff" stroke="#1838b0" /><path d="M6 9h6M6 11h6M6 13h6" stroke="#1838b0" /></>,
  arc: <><path d="M2 15a9 9 0 019-9M2 15a6 6 0 016-6M2 15a4 4 0 013-3" {...S} /><path d="M2 15L16 5" {...S} /></>,
  fan: <path d="M2 16L16 2M2 16L16 7M2 16l14-4M2 16h14M16 2v14" {...S} />,
  step: <><path d="M2 16l4-3 2 2 4-8" {...S} /><path d="M11 2h5M11 4h5M11 6h5M11 8h5M11 10h5" {...S} /></>,
  vl2: <path d="M2 2l5 7v6M10 2v14M13 2v14M16 2v14" {...S} />,
  fan2: <><path d="M2 16L14 3M2 16L16 9M2 16h14" {...S} /><path d="M8 16a6 6 0 00-1-4M12 16a10 10 0 00-2-6" {...S} strokeDasharray="1 1" /></>,
  hArrow: <path d="M4 9h10M5 6L2 9l3 3M13 6l3 3-3 3" {...S} strokeWidth="1.4" />,
  slashes: <path d="M2 12L11 3M5 15l9-9M8 17l9-9" {...S} />,
  dome: <><path d="M2 16v-5a7 7 0 0114 0v5" {...S} /><path d="M2 16v-3a2.5 2.5 0 015 0v3M7 16v-3a2.5 2.5 0 015 0v3M11.5 16v-3a2.3 2.3 0 014.5 0" {...S} /></>,
  pencil: <><path d="M1 16h9" {...S} /><path d="M9 14l5-11 3 1-5 11-3 1z" fill="#e8e040" stroke="#000" /><path d="M14 3l3 1 .5-1.5-3-1z" fill="#d02020" /></>,
  curve: <path d="M3 15h3q5-1 7-11" {...S} strokeWidth="1.2" />,
  down: <path d="M7 3h4v7h3l-5 6-5-6h3z" fill="#ff0000" />,
  up: <path d="M7 15h4V8h3L9 2 4 8h3z" fill="#0000ff" />,
  circle: <circle cx="9" cy="9" r="7" fill="none" stroke="#000" strokeWidth="1.1" />,
  rect: <rect x="2.5" y="2" width="13" height="14" fill="none" stroke="#000" strokeWidth="1.1" />,
};

const tools = [
  "grip:31.5:5", "new", "open", "save", "check", "box", "|", "preview", "print", "|",
  "winA", "winB", "lock", "dish", "cubes", "|", "combo", "play", "scan", "grip:22:2",
  "grayA", "grayB", "table", "|", "chartWave", "updown", "stack", "|", "edit1", "edit2", "|",
  "cal", "search", "bars", "blueBars", "candles", "|", "inV", "outV", "|", "zin", "zout", "|",
  "cursor", "chartT", "|", "hammer", "|", "grid", "|", "note", "grip:31:4",
  "fork", "vlines", "hlines", "calc", "arc", "fan", "step", "vl2", "fan2", "hArrow", "slashes", "dome", "pencil", "|",
  "curve", "down", "up", "circle", "rect", "abc",
];

const renderTool = (t: string, i: number) => {
  if (t === "|") return <ToolSep key={i} />;
  if (t === "combo") {
    return (
      <Combo key={i}>
        <Triangle $dir="down" />
      </Combo>
    );
  }
  if (t === "play") {
    return (
      <PlaySlot key={i}>
        <Triangle $dir="right" />
      </PlaySlot>
    );
  }
  if (t === "abc") {
    return (
      <ToolButton key={i}>
        <AbcLabel>abc</AbcLabel>
      </ToolButton>
    );
  }
  if (t.startsWith("grip")) {
    const [, w, right] = t.split(":");
    return <Grip key={i} $w={Number(w)} $right={Number(right)} />;
  }
  return (
    <ToolButton key={i} $pressed={t === "cursor"}>
      <svg width="18" height="18" viewBox="0 0 18 18">
        {icons[t]}
      </svg>
    </ToolButton>
  );
};

const MdiGlyph = ({ kind }: { kind: "min" | "restore" | "close" }) => (
  <svg width="12" height="12" viewBox="0 0 12 12">
    {kind === "min" && <rect x="2" y="8" width="6" height="2" fill="#6a7684" />}
    {kind === "restore" && (
      <path d="M4 1h6v5H8M2 4h6v6H2zM2 5h6" fill="none" stroke="#5a6674" />
    )}
    {kind === "close" && <path d="M2 2l7 7M9 2l-7 7" stroke="#5a6674" strokeWidth="1.8" />}
  </svg>
);

const Mdi = ({ overlay }: { overlay?: boolean }) => (
  <MdiButtons $overlay={overlay}>
    <MdiButton><MdiGlyph kind="min" /></MdiButton>
    <MdiButton><MdiGlyph kind="restore" /></MdiButton>
    <MdiButton><MdiGlyph kind="close" /></MdiButton>
  </MdiButtons>
);

const Series = ({ pts, color, w = 1, dash }: { pts: Pt[]; color: string; w?: number; dash?: string }) => (
  <polyline
    points={toPoints(pts)}
    fill="none"
    stroke={color}
    strokeWidth={w}
    strokeDasharray={dash}
    strokeLinejoin="round"
    shapeRendering="crispEdges"
  />
);

const ChartDrawing = () => (
  <PlotSvg width="1838" height="901" viewBox="2 89 1838 901">
    {/* date dividers */}
    {dateDividers.map((x) => (
      <g key={x} stroke="#555" strokeDasharray="7 4" shapeRendering="crispEdges">
        <line x1={x + 0.5} x2={x + 0.5} y1="108" y2="555" />
        <line x1={x + 0.5} x2={x + 0.5} y1="577" y2="771" />
        <line x1={x + 0.5} x2={x + 0.5} y1="793" y2="989" />
      </g>
    ))}

    {/* price pane */}
    {arcs.map((a, i) => (
      <Series key={i} pts={a} color="#005c5c" dash="14 5" />
    ))}
    {[38, 518, 998, 1478].map((x) => (
      <rect key={x} x={x - 3} y="550.5" width="6" height="6" fill="#fff" />
    ))}
    <Series pts={maYellow} color="#ffff00" />
    <Series pts={maBlue} color="#0000ff" w={2.5} />
    <Series pts={price} color="#6666ff" />
    <path d={priceMarkers} fill="#00ffff" shapeRendering="crispEdges" />

    {/* macd pane */}
    <g shapeRendering="crispEdges">
      <line x1="2" x2="1658" y1="667.5" y2="667.5" stroke="#800080" />
      <line x1="2" x2="1658" y1="691.5" y2="691.5" stroke="#008080" />
    </g>
    <Series pts={leoTeal} color="#008080" />
    <Series pts={macdTeal} color="#008080" />
    <Series pts={macdDotted} color="#ffff00" dash="2 3" />
    <Series pts={macdYellow} color="#ffff00" />
    <Series pts={leoRed} color="#ff0000" dash="3 2" />
    <Series pts={leoBlue} color="#0000ff" />

    {/* stoc / cci pane */}
    <path d={histPath()} stroke="#2a2a2a" shapeRendering="crispEdges" />
    <g shapeRendering="crispEdges" stroke="#808080">
      <line x1="2" x2="1658" y1="817.5" y2="817.5" />
      <line x1="2" x2="1658" y1="931.5" y2="931.5" />
    </g>
    <Series pts={stoc} color="#cc6600" dash="3 2" />
    {cciPieces.map((p, i) => (
      <Series key={i} pts={p.pts} color={p.color} />
    ))}
    <circle cx="888" cy="800" r="3.5" fill="#00ffff" />
    <circle cx="1323" cy="800" r="3.5" fill="#00ffff" />
    <circle cx="338" cy="983" r="4" fill="#ff0000" />

    {/* hand drawn markup */}
    {drawnStrokes.map((s, i) => (
      <Series key={i} pts={s.pts} color="#10f010" w={s.w} />
    ))}
  </PlotSvg>
);

const TIME_TICKS = Array.from({ length: 26 }, (_, i) => 43.7 + i * 70);

export default function App() {
  return (
    <Shell>
      <GlobalStyle />

      <TitleBar>
        <AppLogo width="18" height="24" viewBox="0 0 18 24">
          <path d="M9 1c5 2 8 8 7 14-1 5-6 8-10 7C2 21 0 17 2 12c1-4 4-7 5-11z" fill="#1c4fc8" />
          <path d="M8 6c3 2 5 6 4 10-1 2-3 3-5 2 1-3 0-8 1-12z" fill="#9cc8f4" />
        </AppLogo>
        <TitleText>{"TradeStation 8.1 - STOX_FIB - SITO Indici - [Chart Analysis - GS:FTSEMIB  4 min  [MCEDB] SPMIB FUTURES]"}</TitleText>
        <WindowButtons>
          <WindowButton>
            <svg width="18" height="8" viewBox="0 0 18 8"><rect y="2" width="17" height="5" fill="#fff" /></svg>
          </WindowButton>
          <WindowButton>
            <svg width="20" height="22" viewBox="0 0 20 22">
              <path d="M6 3h12v13H14" fill="none" stroke="#e8eef4" strokeWidth="1.6" />
              <rect x="2" y="7" width="12" height="13" fill="none" stroke="#fff" strokeWidth="2" />
              <rect x="6" y="11" width="4" height="4" fill="none" stroke="#28384a" />
            </svg>
          </WindowButton>
          <WindowButton $close>
            <svg width="20" height="20" viewBox="0 0 20 20">
              <path d="M3 2l14 16M17 2L3 18" stroke="#fff" strokeWidth="4.4" />
            </svg>
          </WindowButton>
        </WindowButtons>
      </TitleBar>

      <MenuBar>
        <MenuLogo width="19" height="17" viewBox="0 0 19 17">
          <rect width="19" height="17" fill="#000" />
          <rect y="15" width="19" height="2" fill="#c01818" />
          <path d="M2 11l3-4 2 3 3-6 2 4 3-5 2 4" fill="none" stroke="#20d020" />
        </MenuLogo>
        {menus.map(([label, w]) => (
          <MenuItem key={label} $w={w}>{label}</MenuItem>
        ))}
        <Mdi />
      </MenuBar>

      <ToolBar>{tools.map(renderTool)}</ToolBar>

      <ChartBody>
        <Plot>
          <ChartDrawing />
          {legends.map((row) => (
            <Legend key={row.top} $top={row.top}>
              {row.items.map((it, i) => {
                const next = row.items[i + 1];
                return (
                  <LegendItem key={i} $color={it.c} $w={next ? next.x - it.x : 120}>
                    {it.t}
                  </LegendItem>
                );
              })}
            </Legend>
          ))}
        </Plot>
        <PriceAxis>
          <Mdi overlay />
          {axisTicks.map((y) => (
            <Tick key={y} style={{ top: y - 89 }} />
          ))}
          {axisLabels.map(([text, y], i) => (
            <AxisLabel key={i} style={{ top: y - 89 - 11 }}>{text}</AxisLabel>
          ))}
          {priceTags.map(([text, y, bg]) => (
            <PriceTag key={y} $bg={bg} style={{ top: y - 89 }}>{text}</PriceTag>
          ))}
        </PriceAxis>
      </ChartBody>

      <TimeAxis>
        <TimeRule />
        {TIME_TICKS.map((x) => (
          <TimeTick key={x} style={{ left: x - 2 }} />
        ))}
        {dateDividers.map((x) => (
          <TimeTick key={x} $long style={{ left: x - 2 }} />
        ))}
        {timeLabels.map(([text, x]) => (
          <TimeLabel key={text} style={{ left: x - 2 }}>{text}</TimeLabel>
        ))}
      </TimeAxis>

      <ScrollRow>
        <Triangle $dir="left" $color="#5a5a5a" />
        <ScrollThumb>
          <ThumbLine />
          <ThumbLine />
          <ThumbLine />
        </ScrollThumb>
        <Triangle $dir="right" $color="#6a6a6a" />
      </ScrollRow>

      <TabStrip>
        <TabNav>
          <TabNavButton><NavBar /><Triangle $dir="left" $color="#8a8a8a" /></TabNavButton>
          <TabNavButton><Triangle $dir="left" $color="#8a8a8a" /></TabNavButton>
          <TabNavButton><Triangle $dir="right" $color="#8a8a8a" /></TabNavButton>
          <TabNavButton><Triangle $dir="right" $color="#8a8a8a" /><NavBar /></TabNavButton>
        </TabNav>
        {tabs.map(([label, w]) => (
          <Tab key={label} $w={w}>{label}</Tab>
        ))}
        <Tab $w={79} $active>SITO Indici</Tab>
      </TabStrip>

      <StatusBar>
        <StatusHelp>For Help, press F1</StatusHelp>
        <StatusCell $w={53}>Acct:</StatusCell>
        <StatusCell $w={92}>Open Psns:</StatusCell>
        <StatusCell $w={62}>DT BP:</StatusCell>
        <StatusCell $w={87}>Purch Pwr:</StatusCell>
        <StatusCell $w={94}>Closed P/L:</StatusCell>
        <StatusCell $w={59}>RT TE:</StatusCell>
        <StatusCell $w={84}>Open P/L:</StatusCell>
        <StatusCell $w={88} $color="#008000">ORDER BAR</StatusCell>
        <StatusCell $w={69} $color="#009966">MACROS</StatusCell>
        <StatusCell $w={18}><StatusDot /></StatusCell>
        <StatusCell $w={124}>28/02/2022 10:55</StatusCell>
      </StatusBar>
    </Shell>
  );
}
